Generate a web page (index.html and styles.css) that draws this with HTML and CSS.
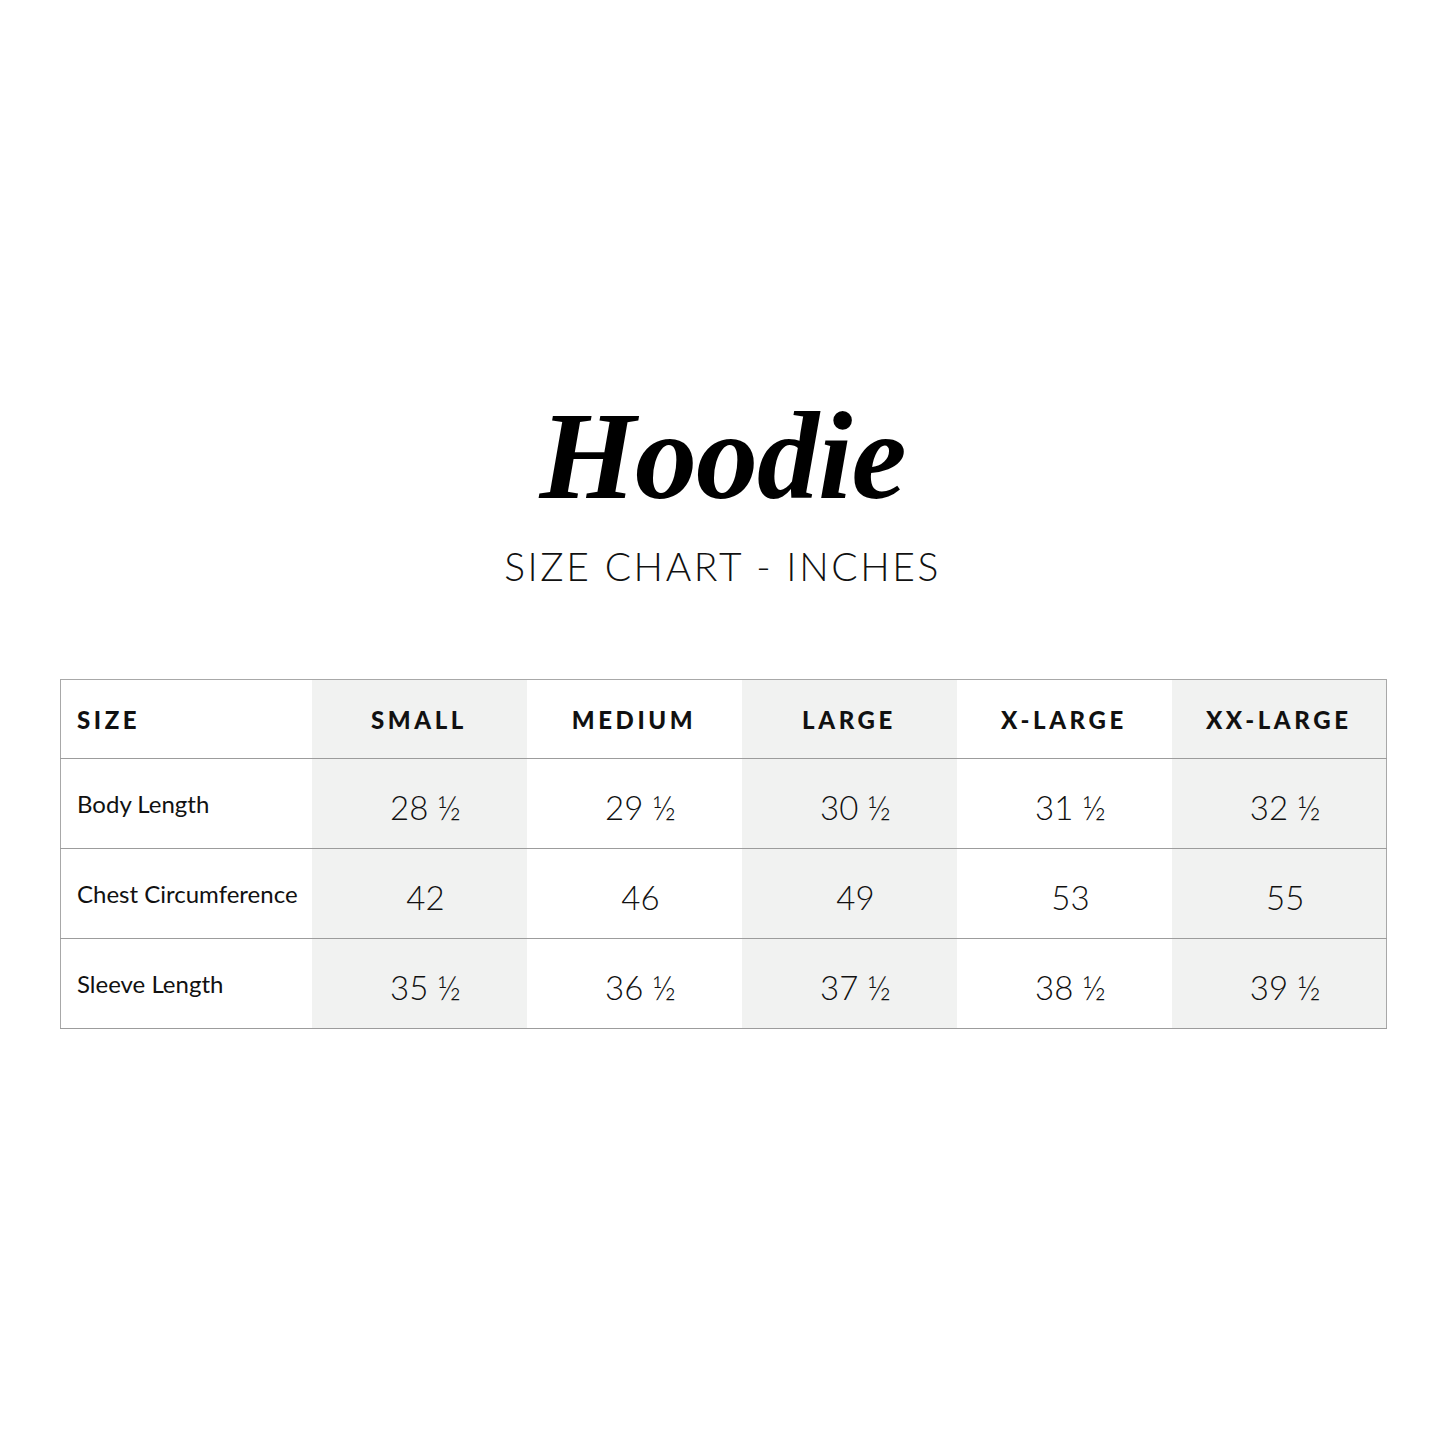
FILE: index.html
```html
<!DOCTYPE html>
<html>
<head>
<meta charset="utf-8">
<link rel="stylesheet" href="styles.css">
</head>
<body>
<main class="page">
  <header class="heading">
    <h1 class="title">Hoodie</h1>
    <p class="subtitle">SIZE CHART - INCHES</p>
  </header>
  <table class="chart">
    <colgroup>
      <col class="c-label">
      <col class="c-shade">
      <col class="c-plain">
      <col class="c-shade">
      <col class="c-plain">
      <col class="c-shade">
    </colgroup>
    <thead>
      <tr>
        <th class="label">SIZE</th>
        <th>SMALL</th>
        <th>MEDIUM</th>
        <th>LARGE</th>
        <th>X-LARGE</th>
        <th>XX-LARGE</th>
      </tr>
    </thead>
    <tbody>
      <tr>
        <td class="label">Body Length</td>
        <td>28 ½</td><td>29 ½</td><td>30 ½</td><td>31 ½</td><td>32 ½</td>
      </tr>
      <tr>
        <td class="label">Chest Circumference</td>
        <td>42</td><td>46</td><td>49</td><td>53</td><td>55</td>
      </tr>
      <tr>
        <td class="label">Sleeve Length</td>
        <td>35 ½</td><td>36 ½</td><td>37 ½</td><td>38 ½</td><td>39 ½</td>
      </tr>
    </tbody>
  </table>
</main>
</body>
</html>
```
FILE: styles.css
```css
html, body {
  margin: 0;
  padding: 0;
  background: #ffffff;
}
.page {
  width: 1445px;
  height: 1445px;
  box-sizing: border-box;
  padding: 392px 60px 0 60px;
  font-family: "Lato", "Liberation Sans", sans-serif;
  color: #111;
}
.heading {
  text-align: center;
}
.title {
  margin: 0;
  font-family: "Liberation Serif", serif;
  font-style: italic;
  font-weight: 700;
  font-size: 124px;
  line-height: 130px;
  letter-spacing: -1px;
  color: #000;
}
.subtitle {
  margin: 22px 0 0 0;
  font-family: "Lato", sans-serif;
  font-weight: 300;
  font-size: 39px;
  line-height: 44px;
  letter-spacing: 2.6px;
  color: #111;
}
.chart {
  margin-top: 91px;
  width: 1324px;
  border-collapse: collapse;
  border: 1px solid #a8a8a8;
  table-layout: fixed;
}
.c-label { width: 251px; }
.c-shade { background: #f1f2f1; width: 215px; }
.c-plain { background: #ffffff; width: 215px; }
.chart th, .chart td {
  padding: 0;
  text-align: center;
  border-bottom: 1px solid #9c9c9c;
}
.chart th {
  height: 78px;
  font-family: "Lato", sans-serif;
  font-weight: 900;
  font-size: 24px;
  letter-spacing: 3.6px;
  color: #111;
}
.chart td {
  height: 90px;
  padding-left: 13px;
  padding-top: 6px;
  box-sizing: border-box;
  font-family: "Lato", sans-serif;
  font-weight: 300;
  font-size: 33px;
  color: #111;
}
.chart .label {
  text-align: left;
  padding-left: 16px;
}
.chart td.label {
  padding-top: 0;
  font-weight: 400;
  font-size: 24px;
  letter-spacing: 0;
}
```
